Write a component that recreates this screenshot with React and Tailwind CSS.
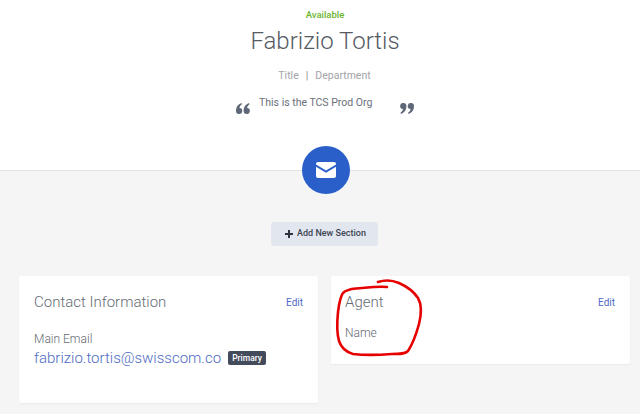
import React from "react";

function Mail() {
  return (
    <svg width="20" height="16" viewBox="0 0 20 16" aria-hidden="true">
      <path d="M2 0H18A2 2 0 0 1 20 2V2.6L10 8.6L0 2.6V2A2 2 0 0 1 2 0Z" fill="#fff" />
      <path d="M0 4.8L10 10.8L20 4.8V14A2 2 0 0 1 18 16H2A2 2 0 0 1 0 14Z" fill="#fff" />
    </svg>
  );
}

function Quote({ flip }) {
  return (
    <svg width="14" height="11" viewBox="0 0 14 11" fill="#5f6878" aria-hidden="true" className={flip ? "rotate-180" : ""}>
      <path d="M3 11A3 3 0 0 1 0 8C0 4.5 1.5 1.5 5.4 0L6 1.2C4.4 2.2 3.6 3.4 3.5 5A3 3 0 0 1 3 11Z" />
      <path d="M10.6 11A3 3 0 0 1 7.6 8C7.6 4.5 9.1 1.5 13 0L13.6 1.2C12 2.2 11.2 3.4 11.1 5A3 3 0 0 1 10.6 11Z" />
    </svg>
  );
}

export default function App() {
  return (
    <div className="relative w-[640px] h-[414px] overflow-hidden bg-[#f5f5f5] font-['Roboto',sans-serif]">
      <div className="relative h-[171px] bg-white border-b border-[#e2e2e2] flex flex-col items-center pl-[10px]">
        <div className="mt-[8px] h-[13px] leading-[13px] text-[9.5px] font-medium text-[#6bb52e]">Available</div>
        <div className="mt-[3px] h-[35px] leading-[35px] text-[24px] font-light text-[#555a63]">Fabrizio Tortis</div>
        <div className="mt-[9px] h-[15px] leading-[15px] text-[10.5px] text-[#a3a3a8] flex gap-[7px] pr-[1px]">
          <span>Title</span><span className="text-[#8a8a90]">|</span><span>Department</span>
        </div>
        <div className="mt-[12px] w-[178px] flex items-start">
          <span className="mt-[8px]"><Quote /></span>
          <span className="ml-[9px] h-[15px] leading-[15px] text-[10.5px] text-[#6a707b]">This is the TCS Prod Org</span>
          <span className="mt-[8px] ml-auto"><Quote flip /></span>
        </div>
        <div className="absolute left-[302px] top-[146px] w-[48px] h-[48px] rounded-full bg-[#2a5fc9] flex items-center justify-center">
          <Mail />
        </div>
      </div>

      <div className="flex justify-center mt-[51px] pl-[9px]">
        <button className="w-[107px] h-[24px] pl-[2px] rounded-[3px] bg-[#e2e6ee] flex items-center justify-center gap-[4px] text-[9px] font-medium text-[#3d4553]">
          <svg width="8" height="8" viewBox="0 0 8 8" fill="#2d3440" aria-hidden="true">
            <path d="M3 0H5V3H8V5H5V8H3V5H0V3H3Z" />
          </svg>
          <span>Add New Section</span>
        </button>
      </div>

      <div className="flex items-start gap-[13px] pl-[19px] mt-[30px]">
        <div className="w-[299px] h-[127px] bg-white rounded-[2px] shadow-[0_1px_2px_rgba(0,0,0,0.05)] pl-[15px] pr-[15px] pt-[16px]">
          <div className="flex justify-between items-center h-[20px]">
            <span className="text-[15px] font-light text-[#666c75]">Contact Information</span>
            <span className="text-[10px] text-[#4d6bc4]">Edit</span>
          </div>
          <div className="mt-[20px] h-[15px] leading-[15px] text-[12px] font-light text-[#666a70]">Main Email</div>
          <div className="mt-[1px] flex items-center gap-[7px]">
            <span className="text-[15px] leading-[20px] font-light text-[#4d6bc4]">fabrizio.tortis@swisscom.co</span>
            <span className="w-[38px] h-[14px] leading-[14px] text-center rounded-[2px] bg-[#434b5c] text-white text-[8.5px] font-medium">Primary</span>
          </div>
        </div>
        <div className="w-[299px] h-[88px] bg-white rounded-[2px] shadow-[0_1px_2px_rgba(0,0,0,0.05)] pl-[14px] pr-[15px] pt-[16px]">
          <div className="flex justify-between items-center h-[20px]">
            <span className="text-[15px] font-light text-[#666c75]">Agent</span>
            <span className="text-[10px] text-[#4d6bc4]">Edit</span>
          </div>
          <div className="mt-[13px] h-[16px] leading-[16px] text-[12px] font-light text-[#666a70]">Name</div>
        </div>
      </div>

      <svg className="absolute left-0 top-0 pointer-events-none" width="640" height="414" viewBox="0 0 640 414" fill="none" aria-hidden="true">
        <path
          d="M378 282C384 280 392 280 399 283C408 287 414 292 418 298C422 305 421 316 419 324C416 335 412 345 408 351C405 354 400 354 392 354C378 355 362 355 353 354C346 352 341 347 339 341C337 334 337 322 338 312C339 304 340 297 343 293C346 290 350 289 356 288.5C365 288 376 286 387 287"
          stroke="#e60000"
          strokeWidth="2.6"
          strokeLinecap="round"
          strokeLinejoin="round"
        />
      </svg>
    </div>
  );
}
